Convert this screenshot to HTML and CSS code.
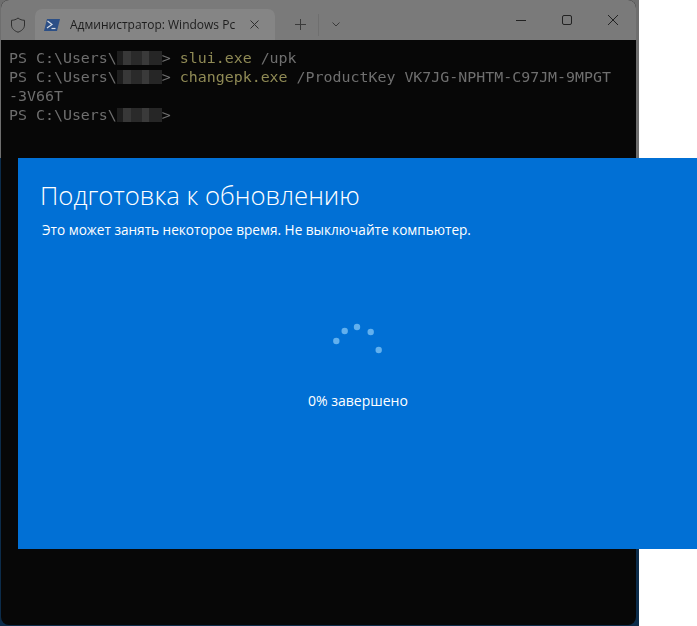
FILE: index.html
```html
<!DOCTYPE html>
<html lang="ru">
<head>
<meta charset="utf-8">
<title>Подготовка к обновлению</title>
<link rel="stylesheet" href="styles.css">
</head>
<body>
<div class="desktop">
  <div class="window">
    <div class="titlebar">
      <svg class="shield" width="16" height="16" viewBox="0 0 16 16"><path d="M8 1 C10 2.600 12 3.200 14.500 3.300 V8 C14.500 11.600 11.500 14 8 15.200 C4.500 14 1.500 11.600 1.500 8 V3.300 C4 3.200 6 2.600 8 1 Z" fill="none" stroke="#2f2f2f" stroke-width="1"/></svg>
      <div class="tab">
        <svg class="ps" width="16" height="12" viewBox="0 0 16 12"><path d="M3 0 H16 L13 12 H0 Z" fill="#2c4f86"/><path d="M3.500 2 L8 5.500 L3 9" fill="none" stroke="#d8dde6" stroke-width="1.200"/><path d="M7.500 9.500 H11.500" stroke="#d8dde6" stroke-width="1.200"/></svg>
        <span class="tab-title">Администратор: Windows Pc</span>
        <svg class="tab-close" width="9" height="9" viewBox="0 0 9 9"><path d="M.5 .5 L8.500 8.500 M8.500 .5 L.5 8.500" stroke="#2e2e2e" stroke-width="1"/></svg>
      </div>
      <svg class="plus" width="11" height="11" viewBox="0 0 11 11"><path d="M5.500 0 V11 M0 5.500 H11" stroke="#3a3a3a" stroke-width="1"/></svg>
      <span class="divider"></span>
      <svg class="chev" width="8" height="5" viewBox="0 0 8 5"><path d="M.5 .5 L4 4 L7.500 .5" fill="none" stroke="#3a3a3a" stroke-width="1"/></svg>
      <div class="controls">
        <svg width="10" height="10" viewBox="0 0 10 10"><path d="M0 5.500 H10" stroke="#222" stroke-width="1"/></svg>
        <svg width="10" height="10" viewBox="0 0 10 10"><rect x=".5" y=".5" width="9" height="9" rx="1.500" fill="none" stroke="#222" stroke-width="1"/></svg>
        <svg width="10" height="10" viewBox="0 0 10 10"><path d="M0 0 L10 10 M10 0 L0 10" stroke="#222" stroke-width="1"/></svg>
      </div>
    </div>
    <div class="terminal">
      <div class="line">PS C:\Users\<span class="mask"></span>&gt; <span class="cmd">slui.exe</span> /upk</div>
      <div class="line">PS C:\Users\<span class="mask"></span>&gt; <span class="cmd">changepk.exe</span> /ProductKey VK7JG-NPHTM-C97JM-9MPGT</div>
      <div class="line">-3V66T</div>
      <div class="line">PS C:\Users\<span class="mask"></span>&gt;</div>
    </div>
  </div>
</div>
<div class="upgrade">
  <h1 class="upgrade-title">Подготовка к обновлению</h1>
  <p class="upgrade-note">Это может занять некоторое время. Не выключайте компьютер.</p>
  <svg class="spinner" width="60" height="40" viewBox="0 0 60 40">
    <circle cx="7.300" cy="18" r="3.200"/><circle cx="15.700" cy="8" r="3.200"/><circle cx="28" cy="4" r="3.200"/><circle cx="41.700" cy="9" r="3.200"/><circle cx="49.700" cy="27" r="3.200"/>
  </svg>
  <p class="upgrade-progress">0% завершено</p>
</div>
</body>
</html>
```
FILE: styles.css
```css
html, body { margin: 0; height: 100%; background: #fff; overflow: hidden; }
.desktop {
  width: 639px; height: 626px;
  background: linear-gradient(#6e6e6e 0 158px, #0c2c4a 158px);
}
.window {
  width: 635px; height: 625px; margin-left: 1px;
  background: #070707;
  border-radius: 8px;
  overflow: hidden;
  display: flex; flex-direction: column;
}
.titlebar {
  height: 40px; flex: none;
  box-sizing: border-box; padding-top: 9px;
  background: #7a7a7a;
  display: flex; align-items: center;
  filter: blur(.3px);
}
.shield { margin-left: 9px; flex: none; }
.tab {
  width: 240px; height: 31px; margin-left: 9px; flex: none;
  background: #858585;
  border-radius: 7px 7px 0 0;
  display: flex; align-items: center;
  box-sizing: border-box; padding-left: 9px;
}
.tab-title {
  font: 12px "Open Sans", "Liberation Sans", sans-serif;
  color: #1d1d1d; margin-left: 10px; width: 165px; white-space: nowrap; overflow: hidden;
}
.tab-close { margin-left: 15px; }
.plus { margin-left: 20px; flex: none; }
.divider { width: 1px; height: 22px; background: #6f6f6f; margin-left: 12px; flex: none; }
.chev { margin-left: 13px; flex: none; }
.controls { margin-left: auto; margin-bottom: 9px; display: flex; gap: 36px; padding-right: 18px; }
.terminal {
  flex: 1; padding: 9px 8px;
  font: 14.930px/19px "DejaVu Sans Mono", "Liberation Mono", monospace;
  color: #6f6f6f;
  filter: blur(.3px);
}
.line { height: 19px; white-space: pre; }
.cmd { color: #8f8a55; }
.mask {
  display: inline-block; width: 45px; height: 14px; vertical-align: -2px;
  background: linear-gradient(90deg, #1e1e1e 0 14%, #383838 14% 30%, #2a2a2a 30% 55%, #3a3a3a 55% 72%, #262626 72% 100%);
}
.upgrade {
  position: absolute; left: 18px; top: 158px; width: 679px; height: 391px;
  background: #0170d5;
  color: #fff;
  font-family: "Open Sans", "Liberation Sans", sans-serif;
}
.upgrade-title { margin: 22px 0 0 22px; font-size: 25.700px; font-weight: 300; line-height: 32px; }
.upgrade-note { margin: 8px 0 0 24px; font-size: 13.600px; line-height: 20px; }
.spinner { display: block; margin: 83px 0 0 311px; fill: #62b0ee; }
.upgrade-progress { margin: 28px 0 0; padding-left: 290px; font-size: 14px; line-height: 20px; }
```
